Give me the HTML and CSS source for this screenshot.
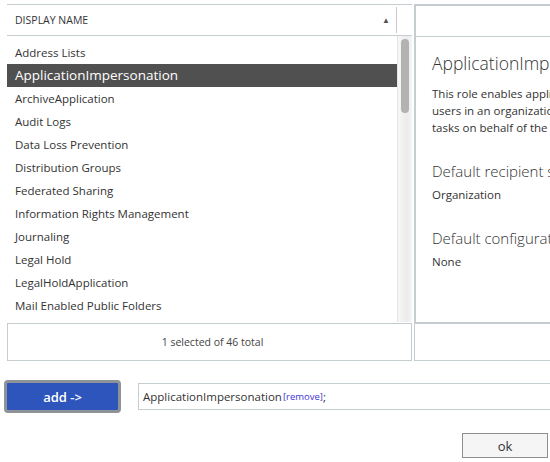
FILE: index.html
```html
<!DOCTYPE html>
<html>
<head>
<meta charset="utf-8">
<link rel="stylesheet" href="styles.css">
</head>
<body>
<div class="top">
  <div class="list-panel">
    <div class="list-head">
      <div class="col-name"><span>DISPLAY NAME</span><span class="sort">&#9650;</span></div>
      <div class="col-sep"></div>
    </div>
    <div class="list-body">
      <ul class="rows">
        <li>Address Lists</li>
        <li class="sel">ApplicationImpersonation</li>
        <li>ArchiveApplication</li>
        <li>Audit Logs</li>
        <li>Data Loss Prevention</li>
        <li>Distribution Groups</li>
        <li>Federated Sharing</li>
        <li>Information Rights Management</li>
        <li>Journaling</li>
        <li>Legal Hold</li>
        <li>LegalHoldApplication</li>
        <li>Mail Enabled Public Folders</li>
        <li>Mail Recipient Creation</li>
      </ul>
      <div class="scrollbar"><div class="thumb"></div></div>
    </div>
    <div class="list-foot">1 selected of 46 total</div>
  </div>
  <div class="detail-panel">
    <div class="detail-head"></div>
    <div class="detail-body">
      <h1>ApplicationImpersonation</h1>
      <p class="desc">This role enables applications to impersonate<br>users in an organization in order to perform<br>tasks on behalf of the user.</p>
      <h2>Default recipient scope</h2>
      <p class="val">Organization</p>
      <h2 class="second">Default configuration scope</h2>
      <p class="val">None</p>
    </div>
    <div class="detail-foot"></div>
  </div>
</div>
<div class="add-row">
  <button class="add-btn">add -&gt;</button>
  <div class="picked">ApplicationImpersonation<span class="remove">[remove]</span>;</div>
</div>
<div class="ok-row">
  <button class="ok-btn">ok</button>
</div>
</body>
</html>
```
FILE: styles.css
```css
html, body {
  margin: 0;
  padding: 0;
  background: #ffffff;
  font-family: "Open Sans", "Noto Sans", sans-serif;
  color: #333333;
  overflow: hidden;
  width: 550px;
  height: 462px;
}

.top {
  display: flex;
  padding-top: 4px;
  height: 357px;
}

.list-panel {
  margin-left: 7px;
  width: 405px;
  display: flex;
  flex-direction: column;
}

.list-head {
  height: 30px;
  border-top: 1px solid #c6cdd1;
  border-bottom: 1px solid #c6cdd1;
  display: flex;
}

.col-name {
  flex: 1;
  display: flex;
  align-items: center;
  justify-content: space-between;
  padding-left: 8px;
  padding-right: 6px;
  font-size: 10.5px;
  color: #333;
  border-right: 1px solid #c6cdd1;
  margin: 2px 0;
}

.sort {
  font-size: 8px;
  color: #555;
}

.col-sep {
  width: 15px;
}

.list-body {
  height: 287px;
  display: flex;
  overflow: hidden;
}

.rows {
  list-style: none;
  margin: 0;
  padding: 5px 0 0 0;
  flex: 1;
  overflow: hidden;
}

.rows li {
  height: 23px;
  line-height: 23px;
  padding-left: 8px;
  font-size: 11.5px;
  color: #333;
  white-space: nowrap;
}

.rows li.sel {
  background: #505050;
  color: #ffffff;
  font-size: 13.5px;
}

.scrollbar {
  width: 15px;
  background: linear-gradient(to right, #f7f7f7, #ececec 60%, #f4f4f4);
  border-left: 1px solid #e4e4e4;
  padding-top: 3px;
  box-sizing: border-box;
}

.thumb {
  width: 8px;
  height: 74px;
  margin-left: 3px;
  background: #b2b2b2;
  border-radius: 4px;
}

.list-foot {
  margin-top: 1px;
  height: 36px;
  border: 1px solid #c6cdd1;
  display: flex;
  align-items: center;
  justify-content: center;
  padding-left: 6px;
  font-size: 10.5px;
  color: #444;
}

.detail-panel {
  margin-left: 2px;
  flex: 1;
  display: flex;
  flex-direction: column;
  overflow: hidden;
}

.detail-head {
  height: 30px;
  border-top: 2px solid #c6cdd1;
  border-bottom: 1px solid #c6cdd1;
  border-left: 2px solid #c6cdd1;
}

.detail-body {
  height: 286px;
  border-left: 2px solid #c6cdd1;
  border-bottom: 1px solid #c6cdd1;
  padding-left: 16px;
  overflow: hidden;
  white-space: nowrap;
}

.detail-body h1 {
  margin: 14px 0 0 0;
  font-size: 17.5px;
  font-weight: 300;
  color: #333;
  line-height: 24px;
}

.detail-body .desc {
  margin: 10px 0 0 0;
  font-size: 11.5px;
  line-height: 17px;
  color: #333;
}

.detail-body h2 {
  margin: 25px 0 0 0;
  font-size: 15px;
  font-weight: 300;
  color: #333;
  line-height: 20px;
}

.detail-body h2.second {
  margin-top: 25px;
}

.detail-body .val {
  margin: 5px 0 0 0;
  font-size: 11.5px;
  line-height: 17px;
}

.detail-foot {
  height: 36px;
  border: 1px solid #c6cdd1;
  border-right: none;
  margin-left: 0;
}

.add-row {
  display: flex;
  align-items: center;
  margin-top: 19px;
  padding-left: 4px;
}

.add-btn {
  width: 117px;
  height: 33px;
  border: 3px solid #8e9398;
  border-radius: 4px;
  background: #2d55bb;
  color: #ffffff;
  font-family: "Open Sans", sans-serif;
  font-size: 13px;
  font-weight: 600;
  padding: 0;
}

.picked {
  margin-left: 17px;
  flex: 1;
  height: 25px;
  border: 1px solid #c6cdd1;
  border-right: none;
  display: flex;
  align-items: center;
  padding-left: 4px;
  font-size: 11.5px;
  color: #333;
  white-space: nowrap;
}

.remove {
  color: #3c35d6;
  font-size: 9.5px;
  margin-left: 1px;
}

.ok-row {
  display: flex;
  justify-content: flex-end;
  margin-top: 20px;
  padding-right: 2px;
}

.ok-btn {
  width: 86px;
  height: 25px;
  border: 1px solid #8a8f92;
  background: #f5f5f5;
  font-family: "Open Sans", sans-serif;
  font-size: 13px;
  color: #333;
  padding: 0;
}
```
